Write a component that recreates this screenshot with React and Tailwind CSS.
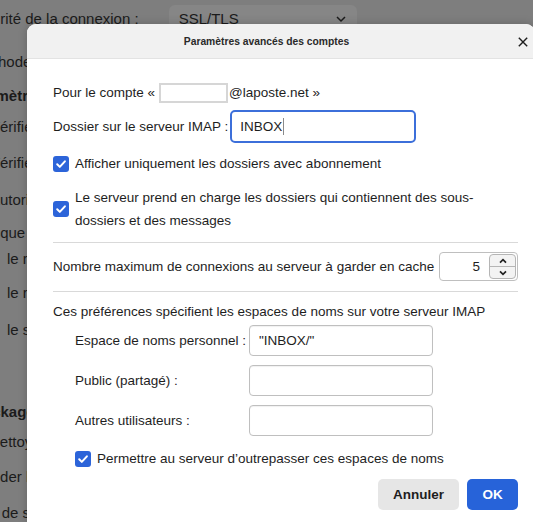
import React from "react";

const font = { fontFamily: '"Liberation Sans", Arial, sans-serif' };

function Check({ className = "" }) {
  return (
    <span
      className={
        "flex h-[16px] w-[16px] shrink-0 items-center justify-center rounded-[3px] bg-[#2c64d9] " +
        className
      }
    >
      <svg width="12" height="12" viewBox="0 0 12 12" fill="none">
        <path
          d="M2.2 6.3l2.6 2.6L9.9 3.3"
          stroke="white"
          strokeWidth="2"
          strokeLinecap="round"
          strokeLinejoin="round"
        />
      </svg>
    </span>
  );
}

function TextBox({ children }) {
  return (
    <div className="flex h-[31px] w-[184px] items-center rounded-[4px] border border-[#bfbfbf] bg-white pl-[9px] shadow-[inset_0_1px_1px_rgba(0,0,0,0.06)]">
      {children}
    </div>
  );
}

function Backdrop() {
  // Account settings page sitting behind the modal, dimmed
  return (
    <div className="flex flex-col whitespace-nowrap text-[15px] leading-[20px] text-[#1b1b1b]">
      <div className="mt-[5px] flex h-[28px] items-center">
        <span className="ml-[-34px]">Sécurité de la connexion :</span>
        <div className="ml-[30px] flex h-[28px] w-[188px] items-center justify-between rounded-[6px] bg-[#868686] px-[10px]">
          <span>SSL/TLS</span>
          <svg width="12" height="8" viewBox="0 0 12 8" fill="none">
            <path d="M2 2l4 4 4-4" stroke="#1b1b1b" strokeWidth="1.5" />
          </svg>
        </div>
      </div>
      <div className="mt-[19px] h-[20px]">
        <span className="ml-[-27px]">Méthode d'authentification :</span>
      </div>
      <div className="mt-[14px] h-[20px] font-bold">
        <span className="ml-[-37px]">Paramètres du serveur</span>
      </div>
      <div className="mt-[11px] h-[20px]">
        <span className="ml-[-10px]">Vérifier les nouveaux messages au démarrage</span>
      </div>
      <div className="mt-[16px] h-[20px]">
        <span className="ml-[-10px]">Vérifier les nouveaux messages toutes les 10 minutes</span>
      </div>
      <div className="mt-[17px] h-[20px]">
        <span className="ml-[-10px]">Autoriser les notifications instantanées</span>
      </div>
      <div className="mt-[13px] h-[20px]">
        <span className="ml-[-29px]">Lorsque je supprime un message :</span>
      </div>
      <div className="mt-[6px] h-[20px] pl-[7px]">le ranger dans ce dossier :</div>
      <div className="mt-[14px] h-[20px] pl-[7px]">le repérer comme supprimé</div>
      <div className="mt-[17px] h-[20px] pl-[7px]">le supprimer immédiatement</div>
      <div className="mt-[62px] h-[20px] font-bold">
        <span className="ml-[-32px]">Stockage des messages</span>
      </div>
      <div className="mt-[10px] h-[20px]">
        <span className="ml-[-11px]">Nettoyer (compacter) les dossiers</span>
      </div>
      <div className="mt-[15px] h-[20px]">
        <span className="ml-[-13px]">Vider la corbeille en quittant</span>
      </div>
      <div className="mt-[16px] h-[20px]">
        <span className="ml-[-35px]">Type de stockage des messages :</span>
      </div>
    </div>
  );
}

function Dialog() {
  return (
    <div className="absolute left-[27px] top-[24px] h-[502px] w-[508px] overflow-hidden rounded-t-[9px] bg-white text-[13.5px] leading-[20px] text-[#1e1e1e] shadow-[0_0_10px_rgba(0,0,0,0.2)]">
      <div className="flex h-[35px] items-center border-b border-[#e3e3e3] bg-[#f1f1f1]">
        <div className="flex-1 pt-[2px] text-center text-[10.3px] font-bold text-[#2a2a2a]">
          Paramètres avancés des comptes
        </div>
        <div className="flex h-full w-[29px] items-center pt-[1px]">
          <svg className="ml-[12px]" width="10" height="10" viewBox="0 0 10 10" fill="none">
            <path d="M0.8 0.8l8.4 8.4M9.2 0.8L0.8 9.2" stroke="#1e1e1e" strokeWidth="1.4" />
          </svg>
        </div>
      </div>

      <div className="flex flex-col pl-[26px] pr-[17px] pt-[24px]">
        <div className="flex h-[20px] items-center whitespace-nowrap">
          <span>Pour le compte «</span>
          <div className="ml-[4px] h-[20px] w-[69px] border-2 border-[#d6d6d6] bg-white" />
          <span className="ml-[1px]">@laposte.net »</span>
        </div>

        <div className="mt-[7px] flex items-center whitespace-nowrap">
          <span>Dossier sur le serveur IMAP :</span>
          <div className="ml-[2px] flex h-[33px] w-[186px] items-center rounded-[5px] border-2 border-[#3c6fda] pl-[8px]">
            <span>INBOX</span>
            <span className="ml-[1px] h-[17px] w-[1px] bg-[#8a8a8a]" />
          </div>
        </div>

        <div className="mt-[11px] flex h-[20px] items-center gap-[6px]">
          <Check />
          <span>Afficher uniquement les dossiers avec abonnement</span>
        </div>

        <div className="mt-[12px] flex items-center gap-[6px]">
          <Check />
          <span className="leading-[23px]">
            Le serveur prend en charge les dossiers qui contiennent des sous-dossiers et des messages
          </span>
        </div>

        <div className="mt-[10px] h-[1px] bg-[#d9d9d9]" />

        <div className="mt-[9px] flex h-[29px] items-center justify-between whitespace-nowrap">
          <span>Nombre maximum de connexions au serveur à garder en cache</span>
          <div className="flex h-[29px] w-[79px] items-center justify-end rounded-[4px] border border-[#bfbfbf] bg-white">
            <span className="mr-[9px]">5</span>
            <div className="mr-[1px] flex h-[25px] w-[27px] flex-col overflow-hidden rounded-[4px] border border-[#b5b5b5] bg-[#f3f3f3]">
              <div className="flex flex-1 items-center justify-center border-b border-[#b5b5b5]">
                <svg width="8" height="6" viewBox="0 0 8 6" fill="none">
                  <path d="M1 4.6L4 1.6l3 3" stroke="#222" strokeWidth="1.7" />
                </svg>
              </div>
              <div className="flex flex-1 items-center justify-center">
                <svg width="8" height="6" viewBox="0 0 8 6" fill="none">
                  <path d="M1 1.4L4 4.4l3-3" stroke="#222" strokeWidth="1.7" />
                </svg>
              </div>
            </div>
          </div>
        </div>

        <div className="mt-[10px] h-[1px] bg-[#d9d9d9]" />

        <div className="mt-[10px] whitespace-nowrap">
          Ces préférences spécifient les espaces de noms sur votre serveur IMAP
        </div>

        <div className="mt-[3px] grid grid-cols-[174px_184px] items-center gap-y-[9px] pl-[22px] whitespace-nowrap">
          <span>Espace de noms personnel :</span>
          <TextBox>"INBOX/"</TextBox>
          <span>Public (partagé) :</span>
          <TextBox />
          <span>Autres utilisateurs :</span>
          <TextBox />
        </div>

        <div className="mt-[13px] flex h-[20px] items-center gap-[6px] pl-[22px] whitespace-nowrap">
          <Check />
          <span>Permettre au serveur d’outrepasser ces espaces de noms</span>
        </div>

        <div className="mt-[10px] flex justify-end gap-[8px]">
          <button className="h-[31px] w-[81px] rounded-[5px] bg-[#e6e6e6] font-bold text-[#1e1e1e]">
            Annuler
          </button>
          <button className="h-[31px] w-[51px] rounded-[5px] bg-[#2763d9] font-bold text-white">
            OK
          </button>
        </div>
      </div>
    </div>
  );
}

export default function App() {
  return (
    <div
      className="relative h-[522px] w-[533px] overflow-hidden bg-[#7e7e7e]"
      style={font}
    >
      <Backdrop />
      <Dialog />
    </div>
  );
}
